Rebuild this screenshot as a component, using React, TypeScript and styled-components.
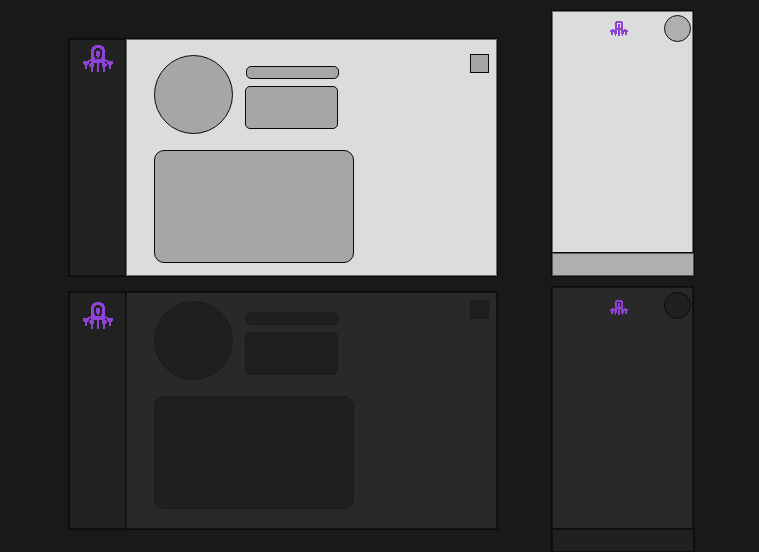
import React from "react";
import styled, { createGlobalStyle, css } from "styled-components";

interface Theme {
  page: string;
  side: string;
  shape: string;
  phoneShape: string;
  line: string;
  ring: string;
}

const light: Theme = {
  page: "#dcdcdc",
  side: "#222222",
  shape: "#a6a6a6",
  phoneShape: "#afafaf",
  line: "#0a0a0a",
  ring: "#111111",
};

const dark: Theme = {
  page: "#292929",
  side: "#212121",
  shape: "#1f1f1f",
  phoneShape: "#202020",
  line: "#1b1b1b",
  ring: "#0a0a0a",
};

const GlobalStyle = createGlobalStyle`
  * { box-sizing: border-box; }
  body { margin: 0; background: #191919; overflow: hidden; }
`;

const Board = styled.main`
  display: grid;
  grid-template-columns: 430fr 144fr;
  column-gap: 53px;
  height: 100vh;
  min-height: 552px;
  padding: 10px 64px 0 68px;
  overflow: hidden;
`;

const DesktopColumn = styled.div`
  display: flex;
  flex-direction: column;
  gap: 14px;
  padding-top: 28px;
`;

const PhoneColumn = styled.div`
  display: flex;
  flex-direction: column;
  gap: 9px;
`;

const Desktop = styled.section`
  display: flex;
  border: 1px solid #0b0b0b;
`;

const Sidebar = styled.aside<{ $t: Theme; $logoTop: number }>`
  flex: 0 0 57px;
  display: flex;
  justify-content: center;
  align-items: flex-start;
  padding-top: ${(p) => p.$logoTop}px;
  padding-left: 2px;
  background: ${(p) => p.$t.side};
  border-right: 1px solid #0f0f0f;
  box-shadow: inset 1px 1px rgba(0, 0, 0, 0.5), inset 0 -1px rgba(0, 0, 0, 0.5);
`;

const Content = styled.div<{ $t: Theme; $top: number; $bottom: number }>`
  flex: 1;
  display: flex;
  justify-content: space-between;
  align-items: flex-start;
  padding: ${(p) => p.$top}px 8px ${(p) => p.$bottom}px 28px;
  background: ${(p) => p.$t.page};
  box-shadow: inset 0 0 0 1px rgba(0, 0, 0, 0.5);
`;

const outline = css<{ $t: Theme }>`
  background: ${(p) => p.$t.shape};
  border: 1px solid ${(p) => p.$t.line};
`;

const Profile = styled.div`
  display: grid;
  grid-template-columns: 79px 93px;
  column-gap: 12px;
  row-gap: 16px;
  padding-top: 1px;
`;

const Avatar = styled.div<{ $t: Theme }>`
  ${outline}
  height: 79px;
  border-radius: 50%;
`;

const Details = styled.div`
  display: flex;
  flex-direction: column;
  gap: 7px;
  padding-top: 11px;
`;

const Title = styled.div<{ $t: Theme }>`
  ${outline}
  height: 13px;
  margin-left: 1px;
  margin-right: -1px;
  border-radius: 5px;
`;

const Summary = styled.div<{ $t: Theme }>`
  ${outline}
  height: 43px;
  border-radius: 5px;
`;

const Card = styled.div<{ $t: Theme }>`
  ${outline}
  grid-column: 1 / -1;
  width: 200px;
  height: 113px;
  border-radius: 10px;
`;

const MenuButton = styled.button<{ $t: Theme }>`
  ${outline}
  width: 19px;
  height: 19px;
  padding: 0;
`;

const Phone = styled.section`
  display: flex;
  flex-direction: column;
  height: 267px;
`;

const Screen = styled.div<{ $t: Theme; $top: number }>`
  flex: 1;
  margin-right: 1px;
  padding: ${(p) => p.$top}px 2px 0 1px;
  background: ${(p) => p.$t.page};
  border: 1px solid #0b0b0b;
  border-bottom: 0;
  box-shadow: inset 1px 1px rgba(0, 0, 0, 0.5), inset -1px 0 rgba(0, 0, 0, 0.5);
`;

const PhoneHeader = styled.header`
  display: grid;
  grid-template-columns: 1fr auto 1fr;
  align-items: start;
`;

const PhoneLogo = styled.div<{ $top: number }>`
  grid-column: 2;
  padding-top: ${(p) => p.$top}px;
  margin-right: 6px;
`;

const PhoneButton = styled.button<{ $t: Theme }>`
  justify-self: end;
  width: 27px;
  height: 27px;
  padding: 0;
  border-radius: 50%;
  background: ${(p) => p.$t.phoneShape};
  border: 1px solid ${(p) => p.$t.ring};
`;

const TabBar = styled.nav<{ $t: Theme }>`
  height: 25px;
  background: ${(p) => p.$t.phoneShape};
  border: 1px solid #0b0b0b;
  box-shadow: inset 0 0 0 1px rgba(0, 0, 0, 0.5);
`;

const LogoSvg = styled.svg`
  display: block;
  fill: #8f43d6;
`;

const armPath =
  "M6 15h1v-1h2v2H7v1H6v2H5v1H4v4H2v-4H1v-1H0v-3h5v-1h1zM8 17h3v5h-1v5H8v-5H7v-1H6v-2h1v-1h1z";

const Logo = () => (
  <LogoSvg width="30" height="27" viewBox="0 0 30 27" shapeRendering="crispEdges" aria-hidden="true">
    <path
      fillRule="evenodd"
      d="M12 0h6v1h2v1h1v2h1v11h2v1h-2v1h-3v1h-3v9h-2v-9h-3v-1H8v-1H6v-1h2V4h1V2h1V1h2zM13 3v1h-1v1h-1v7h1v2h6v-2h1V5h-1V4h-1V3z"
    />
    <path d="M13 6h4v5h-1v2h-2v-2h-1z" />
    <path d={armPath} />
    <path transform="translate(30 0) scale(-1 1)" d={armPath} />
  </LogoSvg>
);

const smallArmPath = "M5 8h2v5H6v2H5v-2H4v-4h1zM2 8h2v3H3v3H1v-3H0V9h2z";

const SmallLogo = () => (
  <LogoSvg width="18" height="15" viewBox="0 0 18 15" shapeRendering="crispEdges" aria-hidden="true">
    <path fillRule="evenodd" d="M6 0h6v1h1v7h-2v1h-1v6H8V9H7V8H5V1h1zM7 2v5h4V2z" />
    <path d="M8 3h2v4H8z" />
    <path d={smallArmPath} />
    <path transform="translate(18 0) scale(-1 1)" d={smallArmPath} />
  </LogoSvg>
);

interface DesktopProps {
  t: Theme;
  logoTop: number;
  top: number;
  bottom: number;
}

const DesktopMock = ({ t, logoTop, top, bottom }: DesktopProps) => (
  <Desktop>
    <Sidebar $t={t} $logoTop={logoTop}>
      <Logo />
    </Sidebar>
    <Content $t={t} $top={top} $bottom={bottom}>
      <Profile>
        <Avatar $t={t} />
        <Details>
          <Title $t={t} />
          <Summary $t={t} />
        </Details>
        <Card $t={t} />
      </Profile>
      <MenuButton $t={t} aria-label="Menu" />
    </Content>
  </Desktop>
);

const PhoneMock = ({ t, top, logoTop }: { t: Theme; top: number; logoTop: number }) => (
  <Phone>
    <Screen $t={t} $top={top}>
      <PhoneHeader>
        <PhoneLogo $top={logoTop}>
          <SmallLogo />
        </PhoneLogo>
        <PhoneButton $t={t} aria-label="Account" />
      </PhoneHeader>
    </Screen>
    <TabBar $t={t} />
  </Phone>
);

export default function App() {
  return (
    <>
      <GlobalStyle />
      <Board>
        <DesktopColumn>
          <DesktopMock t={light} logoTop={6} top={15} bottom={13} />
          <DesktopMock t={dark} logoTop={10} top={8} bottom={20} />
        </DesktopColumn>
        <PhoneColumn>
          <PhoneMock t={light} top={4} logoTop={6} />
          <PhoneMock t={dark} top={5} logoTop={8} />
        </PhoneColumn>
      </Board>
    </>
  );
}
